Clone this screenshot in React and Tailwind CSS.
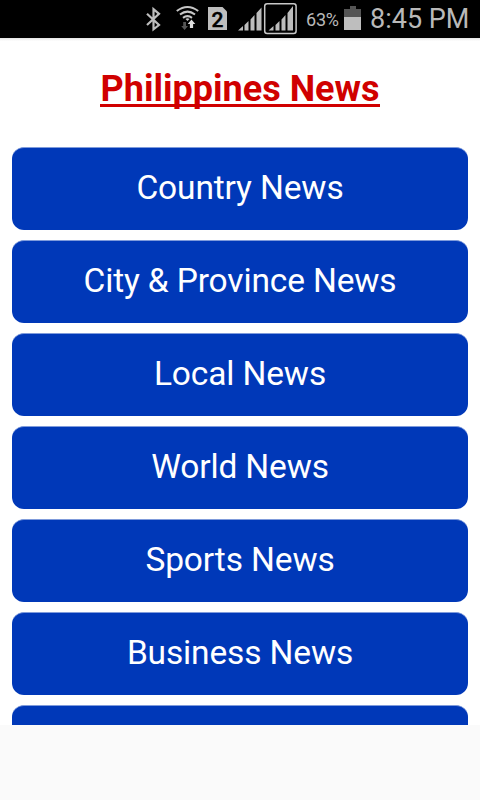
const categories = [
  'Country News',
  'City & Province News',
  'Local News',
  'World News',
  'Sports News',
  'Business News',
  '',
];

function StatusIcons() {
  return (
    <svg className="block h-[38px] w-[300px] shrink-0" viewBox="0 0 300 38" fill="none">
      {/* Bluetooth */}
      <path d="M147 13.8L159 25L153.500 29.300V9.200L159 13.800L147 25" stroke="#bdbdbd" strokeWidth="2.2" />
      {/* Wi-Fi */}
      <g stroke="#c6c6c6" strokeWidth="2.1">
        <path d="M176.800 11Q187.500 3 198.200 11" />
        <path d="M180 14.500Q187.500 8.800 195 14.500" />
        <path d="M183 17.800Q187.500 14.400 192 17.800" />
      </g>
      <path d="M185.500 19Q187.500 17.500 189.500 19L187.500 21z" fill="#c6c6c6" />
      <path d="M183.200 22h2.800v4h2l-3.400 4-3.400-4h2z" fill="#555555" />
      <path d="M191.500 19.500l3.800 4.500h-2.200v4h-3.200v-4h-2.200z" fill="#dedede" />
      {/* SIM 2 */}
      <path d="M208 7h14.500l4.500 4.500V30h-19z" fill="#bebebe" />
      {/* Signal, SIM 1 */}
      <g fill="#bdbdbd">
        <path d="M238 30.500l5-4.500v4.500zM244.500 25l4-4v9.500h-4zM250.500 19.500l4-4.500v15.500h-4zM256.500 13l5-5.500v23h-5z" />
        <path d="M268.500 30.500l5-4.500v4.500zM275.500 25l4-4v9.500h-4zM281.500 19.500l4-4.500v15.500h-4zM287.500 13l5.500-7v24.500h-5.500z" />
      </g>
      <rect x="264.700" y="3.700" width="31.400" height="29.800" rx="2.500" stroke="#c8c8c8" strokeWidth="1.500" />
      <text x="217.500" y="26.500" textAnchor="middle" fontSize="21" fontWeight="500" fill="#000" stroke="#000" strokeWidth=".4" className="font-['Roboto',sans-serif]">2</text>
    </svg>
  );
}

export default function App() {
  return (
    <div className="flex h-[800px] w-[480px] flex-col overflow-hidden bg-[#fafafa] font-['Roboto',sans-serif]">
      <header className="flex h-[38px] shrink-0 items-center bg-black text-[#b9b9b9]">
        <StatusIcons />
        <span className="ml-[6px] w-[38px] pt-[1px] text-[18px] leading-[24px] tracking-[-0.2px]">63%</span>
        <svg className="block h-[38px] w-[18px] shrink-0" viewBox="0 0 18 38">
          <path d="M0 9h6V6h6v3h5v8H0z" fill="#555" />
          <path d="M0 17h17v13H0z" fill="#bebebe" />
        </svg>
        <span className="ml-[8px] whitespace-nowrap text-[27px] leading-[38px]">8:45 PM</span>
      </header>
      <main className="h-[687px] shrink-0 overflow-hidden bg-white">
        <div className="h-[3px] bg-linear-to-b from-[#e4e4e4] to-white" />
        <h1 className="flex h-[106px] justify-center pt-[27px] text-[36px] font-bold leading-[42px] text-[#d00000]">
          <span className="h-[39px] whitespace-nowrap border-b-3 border-[#d00000] px-[0.500px]">Philippines News</span>
        </h1>
        <nav className="flex flex-col gap-[10px] px-3">
          {categories.map((label, index) => (
            <button key={index} className="h-[83px] shrink-0 rounded-xl border-t border-[#7f9bdb] bg-[#0038b8] pb-[3px] text-[33.500px] leading-[40px] tracking-[-0.14px] text-white">
              {label}
            </button>
          ))}
        </nav>
      </main>
    </div>
  );
}
